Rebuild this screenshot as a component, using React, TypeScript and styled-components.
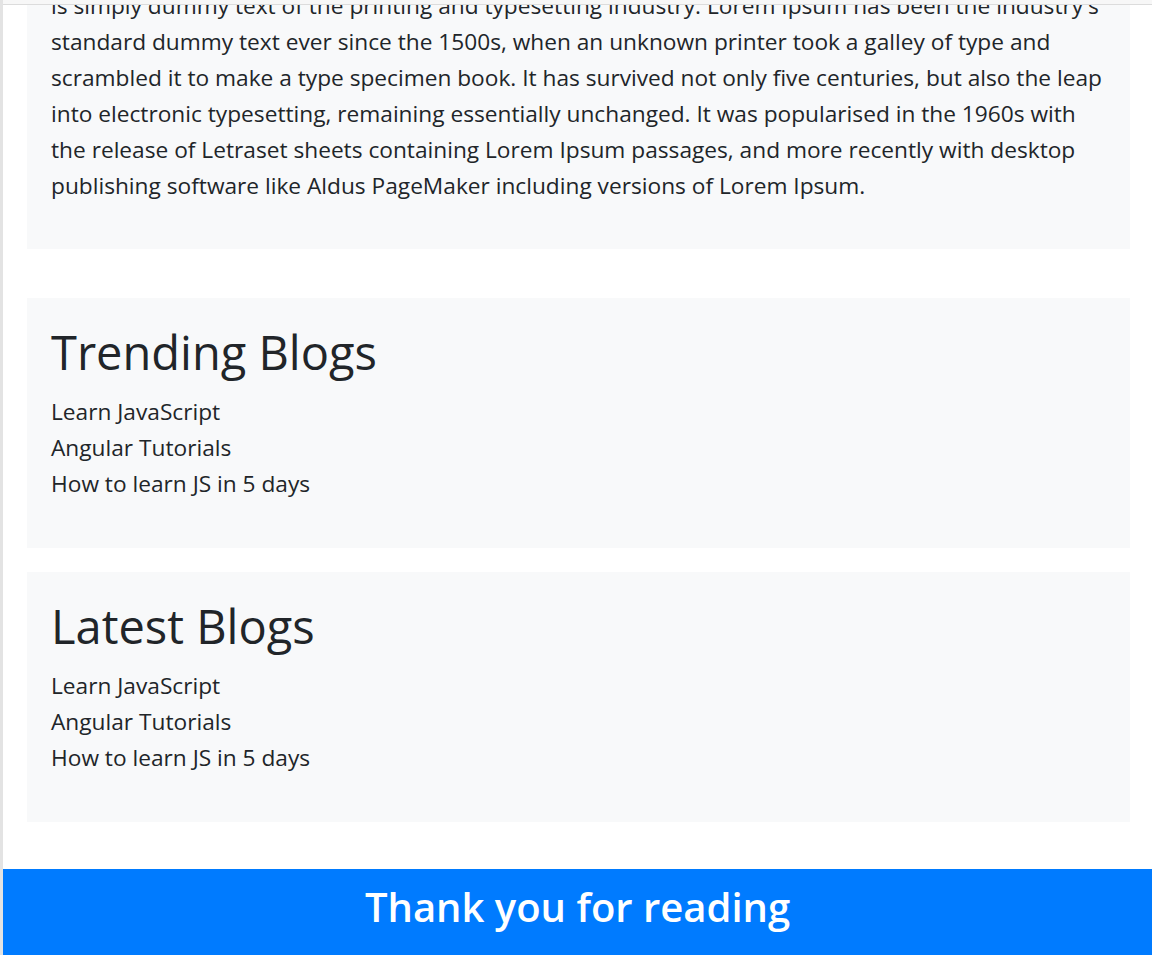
import React from "react";
import styled, { createGlobalStyle } from "styled-components";

const GlobalStyle = createGlobalStyle`
  html, body {
    margin: 0;
    padding: 0;
    background: #f7f7f7;
  }
  body {
    font-family: "Open Sans", "Noto Sans", "Liberation Sans", sans-serif;
    color: #212529;
  }
  * { box-sizing: border-box; }
`;

const Window = styled.div`
  height: 955px;
  padding-top: 4px;
  background: #f7f7f7;
  border-left: 3px solid #e3e3e3;
`;

const Viewport = styled.div`
  height: 951px;
  overflow: hidden;
  background: #ffffff;
  border-top: 1px solid #dcdcdc;
`;

const ScrolledPage = styled.main`
  margin-top: -47px;
  display: flex;
  flex-direction: column;
`;

const Section = styled.section<{ $gap: number }>`
  margin: 0 22px ${(p) => p.$gap}px 24px;
  padding: 28px 24px 31px;
  background: #f8f9fa;
`;

const Paragraph = styled.p`
  margin: 2px 0 14px;
  font-size: 22.7px;
  line-height: 36px;
  font-weight: 400;
`;

const Line = styled.span`
  display: block;
  white-space: nowrap;
`;

const Heading = styled.h1`
  margin: 0 0 16px;
  font-size: 47px;
  line-height: 52px;
  font-weight: 500;
`;

const BlogList = styled.ul`
  list-style: none;
  margin: 0 0 15px;
  padding: 0;
`;

const BlogItem = styled.li`
  font-size: 22.7px;
  line-height: 36px;
`;

const Footer = styled.footer`
  background: #007bff;
  color: #ffffff;
  padding: 14px 0 40px;
  text-align: center;
`;

const FooterTitle = styled.h1`
  margin: 0;
  font-size: 40px;
  line-height: 48px;
  font-weight: 600;
`;

const lines = [
  "is simply dummy text of the printing and typesetting industry. Lorem Ipsum has been the industry's",
  "standard dummy text ever since the 1500s, when an unknown printer took a galley of type and",
  "scrambled it to make a type specimen book. It has survived not only five centuries, but also the leap",
  "into electronic typesetting, remaining essentially unchanged. It was popularised in the 1960s with",
  "the release of Letraset sheets containing Lorem Ipsum passages, and more recently with desktop",
  "publishing software like Aldus PageMaker including versions of Lorem Ipsum.",
];

const blogs = ["Learn JavaScript", "Angular Tutorials", "How to learn JS in 5 days"];

function BlogSection({ title, gap }: { title: string; gap: number }) {
  return (
    <Section $gap={gap}>
      <Heading>{title}</Heading>
      <BlogList>
        {blogs.map((b) => (
          <BlogItem key={b}>{b}</BlogItem>
        ))}
      </BlogList>
    </Section>
  );
}

export default function App() {
  return (
    <>
      <GlobalStyle />
      <Window>
        <Viewport>
          <ScrolledPage>
            <Section $gap={49}>
              <Paragraph>
                {lines.map((l) => (
                  <Line key={l}>{l}</Line>
                ))}
              </Paragraph>
            </Section>
            <BlogSection title="Trending Blogs" gap={24} />
            <BlogSection title="Latest Blogs" gap={47} />
            <Footer>
              <FooterTitle>Thank you for reading</FooterTitle>
            </Footer>
          </ScrolledPage>
        </Viewport>
      </Window>
    </>
  );
}
